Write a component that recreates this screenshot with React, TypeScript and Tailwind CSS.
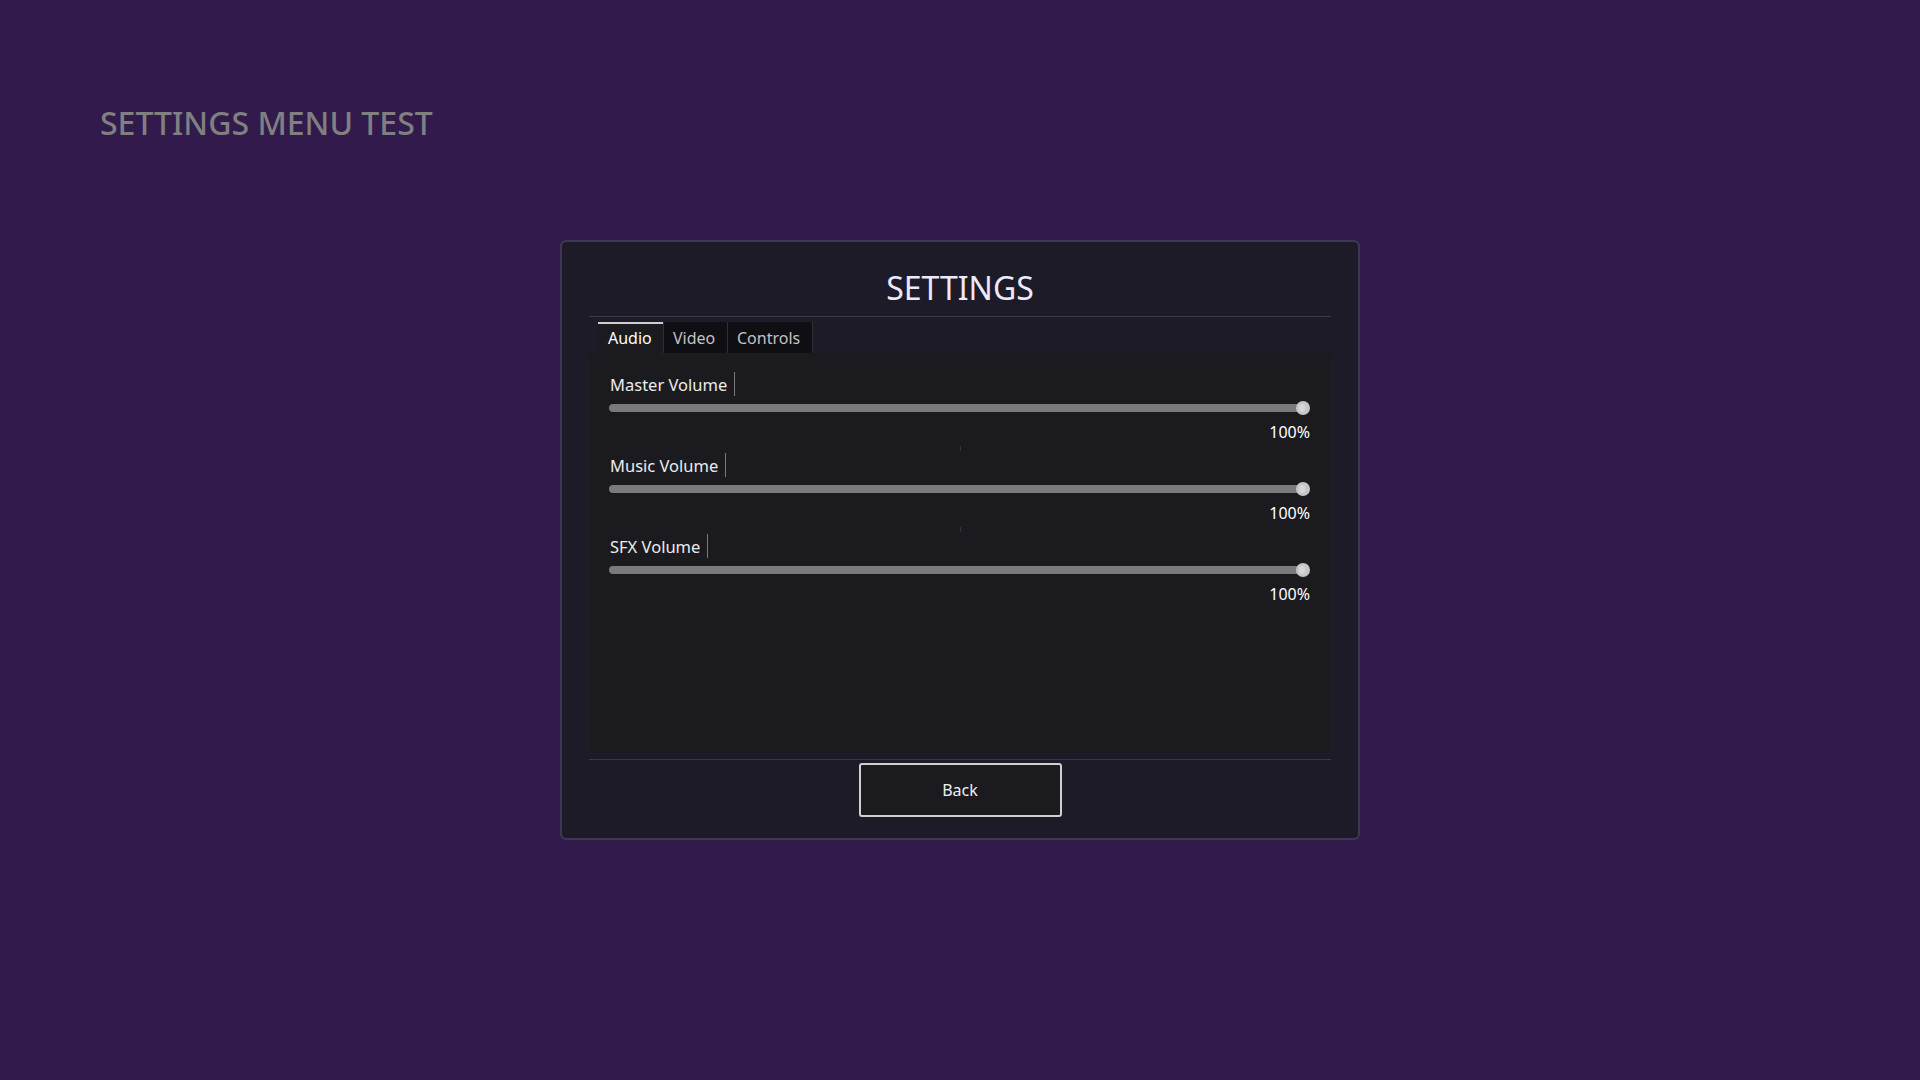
const font = { fontFamily: '"Noto Sans", "Open Sans", sans-serif' };

const VolumeRow = ({ label, value }: { label: string; value: number }) => {
  return (
    <div className="flex flex-col">
      <div className="flex items-center h-[24px] pl-px">
        <span className="text-[16.5px] leading-[24px] pt-[2px] text-[#ececec]">{label}</span>
        <span className="ml-[7px] w-px h-[24px] bg-[#7a7a7a]" />
      </div>
      <div className="mt-[5px] flex items-center h-[14px]">
        <div className="relative flex-1 h-[8px] rounded-full bg-[#7a7a7a]">
          <div className="absolute right-[-7px] top-[-3px] w-[14px] h-[14px] rounded-full bg-[#c6c6c6] flex items-center">
            <div className="ml-[3px] w-[6px] h-[8px] rounded-full bg-[#d6d6d6]" />
          </div>
        </div>
        <div className="w-[8px]" />
      </div>
      <div className="mt-[6px] flex justify-end pr-px">
        <span className="text-[16px] leading-[22px] text-white">{value}%</span>
      </div>
    </div>
  );
};

const Tick = () => (
  <div className="flex justify-center h-[10px] items-center">
    <div className="w-px h-[5px] bg-[#34343c]" />
  </div>
);

const App = () => {
  return (
    <div className="w-full h-screen bg-[#331a4d] overflow-hidden" style={font}>
      <div className="pl-[100px] pt-[108px]">
        <h1 className="text-[32px] leading-[30px] h-[30px] font-medium text-[#808080]">
          SETTINGS MENU TEST
        </h1>
      </div>

      <section className="mx-auto mt-[102px] w-[800px] h-[600px] rounded-[6px] border-2 border-[#3e3652] bg-[#1c1b27] px-[27px] pt-[30px] flex flex-col">
        <h2 className="text-center text-[32px] leading-[32px] h-[32px] text-[#ebe9fb]">SETTINGS</h2>
        <div className="mt-[12px] h-px bg-[#3a3848]" />

        <div className="mt-[5px] flex pl-[9px]">
          <div className="w-[65px] h-[31px] bg-[#1b1b1f] border-t-2 border-[#cfcfcf] pl-[10px] text-[16px] leading-[29px] text-white">
            Audio
          </div>
          <div className="w-[64px] h-[31px] bg-[#0e0e13] border-l border-[#2e2e34] pl-[9px] text-[16px] leading-[33px] text-[#c2c2c6]">
            Video
          </div>
          <div className="w-[86px] h-[31px] bg-[#0e0e13] border-x border-[#2e2e34] pl-[9px] text-[16px] leading-[33px] text-[#c2c2c6]">
            Controls
          </div>
        </div>

        <div className="h-[400px] bg-[#1b1b1f] px-[20px] pt-[19px] flex flex-col">
          <VolumeRow label="Master Volume" value={100} />
          <Tick />
          <VolumeRow label="Music Volume" value={100} />
          <Tick />
          <VolumeRow label="SFX Volume" value={100} />
        </div>

        <div className="mt-[6px] h-px bg-[#3a3848]" />

        <div className="mt-[3px] flex justify-center">
          <button
            type="button"
            className="w-[203px] h-[54px] rounded-[3px] border-2 border-[#cfcfcf] bg-[#1b1b1f] text-[16px] text-[#f0f0f0]"
          >
            Back
          </button>
        </div>
      </section>
    </div>
  );
};

export default App;
